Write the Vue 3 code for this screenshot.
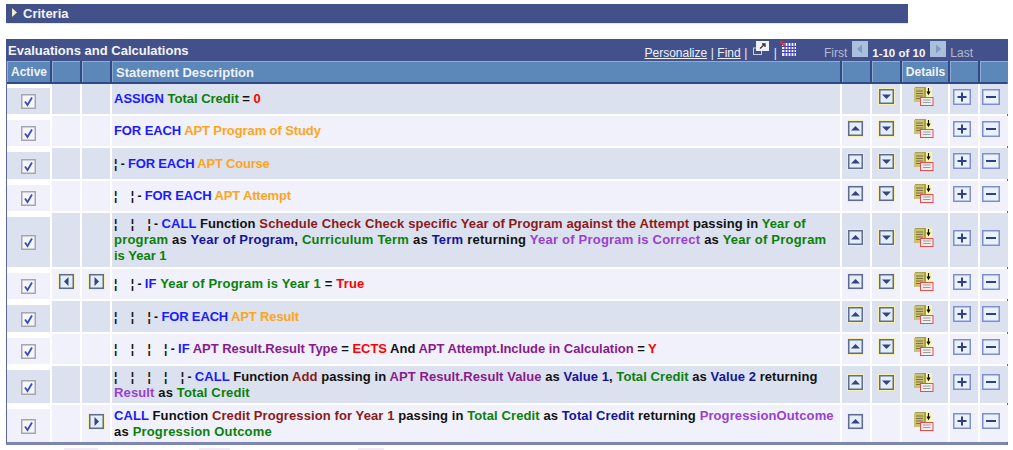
<script setup>
const K = 'kw', V = 'var', O = 'obj', F = 'fn', R = 'lit', P = 'purp', D = 'plain', N = 'navy', M = 'ret', X = 'pre'
const rows = [
  { h: 30, up: 0, down: 1, ls: [0], lines: [[['ASSIGN ', K], ['Total Credit', V], [' = ', D], ['0', R]]] },
  { h: 30, up: 1, down: 1, ls: [-0.1], lines: [[['FOR EACH ', K], ['APT Program of Study', O]]] },
  { h: 31, up: 1, down: 1, ls: [-0.2], lines: [[['¦ - ', X], ['FOR EACH ', K], ['APT Course', O]]] },
  { h: 30, up: 1, down: 1, ls: [-0.15], lines: [[['¦    ¦ - ', X], ['FOR EACH ', K], ['APT Attempt', O]]] },
  { h: 54, up: 1, down: 1, ls: [0.1, 0.22, 0], lines: [
    [['¦    ¦    ¦ - ', X], ['CALL ', K], ['Function ', D], ['Schedule Check Check specific Year of Program against the Attempt ', F], ['passing in ', D], ['Year of', V]],
    [['program ', V], ['as ', D], ['Year of Program', N], [', ', D], ['Curriculum Term ', V], ['as ', D], ['Term ', N], ['returning ', D], ['Year of Program is Correct ', M], ['as ', D], ['Year of Program', V]],
    [['is Year 1', V]]
  ] },
  { h: 30, up: 1, down: 1, left: 1, right: 1, ls: [0.17], lines: [[['¦    ¦ - ', X], ['IF ', K], ['Year of Program is Year 1', V], [' = ', D], ['True', R]]] },
  { h: 31, up: 1, down: 1, ls: [-0.15], lines: [[['¦    ¦    ¦ - ', X], ['FOR EACH ', K], ['APT Result', O]]] },
  { h: 30, up: 1, down: 1, ls: [-0.03], lines: [[['¦    ¦    ¦    ¦ - ', X], ['IF ', K], ['APT Result.Result Type', P], [' = ', D], ['ECTS ', R], ['And ', D], ['APT Attempt.Include in Calculation', P], [' = ', D], ['Y', R]]] },
  { h: 37, up: 1, down: 1, ls: [0.08, 0.14], lines: [
    [['¦    ¦    ¦    ¦    ¦ - ', X], ['CALL ', K], ['Function ', D], ['Add ', F], ['passing in ', D], ['APT Result.Result Value ', P], ['as ', D], ['Value 1', N], [', ', D], ['Total Credit ', V], ['as ', D], ['Value 2 ', N], ['returning', D]],
    [['Result ', M], ['as ', D], ['Total Credit', V]]
  ] },
  { h: 37, up: 1, down: 0, right: 1, ls: [0.1, 0.18], lines: [
    [['CALL ', K], ['Function ', D], ['Credit Progression for Year 1 ', F], ['passing in ', D], ['Total Credit ', V], ['as ', D], ['Total Credit ', N], ['returning ', D], ['ProgressionOutcome', M]],
    [['as ', D], ['Progression Outcome', V]]
  ] }
]
const bodyRows = rows.map(r => r.h + 'px').join(' ')
</script>

<template>
  <div class="page">
    <svg class="defs" width="0" height="0" aria-hidden="true">
      <symbol id="i-check" viewBox="0 0 15 15">
        <rect x="0" y="0" width="15" height="15" fill="#a6a6ae" />
        <rect x="1.5" y="1.5" width="12" height="12" fill="#f5f6fb" />
        <path d="M4 7.5 L6.5 11 L11 3.5" fill="none" stroke="#3a4fb8" stroke-width="1.8" />
      </symbol>
      <symbol id="i-arrow" viewBox="0 0 17 17">
        <rect x="0" y="0" width="17" height="17" fill="#f6efb4" />
        <rect x="1" y="1" width="15" height="15" fill="#5f6c8c" />
        <rect x="2.5" y="2.5" width="12" height="12" fill="#e4eefb" />
        <path d="M4 10.5 H13 L8.5 6 Z" fill="#35447f" />
      </symbol>
      <symbol id="i-plus" viewBox="0 0 18 16">
        <rect x="0" y="0" width="18" height="16" fill="#7d90cc" />
        <rect x="1.5" y="1.5" width="15" height="13" fill="#eaf1fc" />
        <path d="M9 3.5 V12.5 M4.5 8 H13.5" stroke="#2f4185" stroke-width="2" />
      </symbol>
      <symbol id="i-minus" viewBox="0 0 18 16">
        <rect x="0" y="0" width="18" height="16" fill="#7d90cc" />
        <rect x="1.5" y="1.5" width="15" height="13" fill="#eaf1fc" />
        <path d="M4 8 H14" stroke="#2f4185" stroke-width="2" />
      </symbol>
      <symbol id="i-details" viewBox="0 0 20 19">
        <rect x="9" y="0" width="9" height="10" fill="#fdf7a8" />
        <rect x="1" y="0" width="11" height="14" fill="#a89f4a" />
        <rect x="0" y="1" width="10" height="14" fill="#c9c177" />
        <path d="M2 4 H9 M2 6.5 H9 M2 9 H9 M2 11.5 H6" stroke="#7d7636" stroke-width="1" />
        <path d="M14.5 1 V6 M13 4.5 L14.5 7 L16 4.5" fill="none" stroke="#111" stroke-width="1.2" />
        <rect x="6.5" y="10.5" width="12.5" height="8" fill="#eef0f2" stroke="#ee4a4a" />
        <path d="M9 13 H16.5 M9 15.5 H16.5" stroke="#9a9a9a" />
      </symbol>
    </svg>

    <div class="criteria">
      <svg class="tri" viewBox="0 0 5 9" width="5" height="9"><path d="M0 0 L5 4.5 L0 9 Z" fill="#f3e9c8" /></svg>
      <span>Criteria</span>
    </div>

    <div class="box">
      <div class="title">
        <span class="title-text">Evaluations and Calculations</span>
        <div class="nav">
          <a class="link">Personalize</a><span class="sep">|</span>
          <a class="link">Find</a><span class="sep">|</span>
          <svg class="zoom" viewBox="0 0 16 14" width="16" height="14">
            <rect x="0.5" y="7" width="8" height="6.5" fill="none" stroke="#c7cde0" />
            <rect x="3" y="0" width="13" height="10" fill="#eef1f8" />
            <path d="M7 7.5 L12 3 M9 3 H12 V6" fill="none" stroke="#333" stroke-width="1.3" />
          </svg>
          <span class="sep sep2">|</span>
          <svg class="gridi" viewBox="0 0 16 15" width="16" height="15">
            <rect x="2" y="2" width="14" height="13" fill="#f2f4fc" />
            <path d="M5 2 V15 M8 2 V15 M11 2 V15 M14 2 V15 M2 5.5 H16 M2 8.5 H16 M2 11.5 H16" stroke="#3f3fc0" stroke-width="1.2" />
            <path d="M0 0 L5 5" stroke="#e0322c" stroke-width="2" />
          </svg>
          <span class="dim first">First</span>
          <svg class="pg pg1" viewBox="0 0 16 16" width="16" height="16"><rect width="16" height="16" fill="#a9bfdc" /><path d="M10 3.5 V12.5 L5 8 Z" fill="#7f9ac4" /></svg>
          <span class="count">1-10 of 10</span>
          <svg class="pg pg2" viewBox="0 0 16 16" width="16" height="16"><rect width="16" height="16" fill="#a9bfdc" /><path d="M6 3.5 V12.5 L11 8 Z" fill="#7f9ac4" /></svg>
          <span class="dim last">Last</span>
        </div>
      </div>

      <div class="cols head">
        <div class="hc">Active</div><div class="hc"></div><div class="hc"></div>
        <div class="hc desc">Statement Description</div>
        <div class="hc"></div><div class="hc"></div>
        <div class="hc">Details</div>
        <div class="hc"></div><div class="hc"></div>
      </div>

      <div class="cols body" :style="{ gridTemplateRows: bodyRows }">
        <template v-for="(r, i) in rows" :key="i">
          <div class="cell active" :class="i % 2 ? 'odd' : 'even'">
            <svg class="ck"><use href="#i-check" /></svg>
          </div>
          <div class="cell ic" :class="i % 2 ? 'odd' : 'even'">
            <svg v-if="r.left" class="arrow rotl"><use href="#i-arrow" /></svg>
          </div>
          <div class="cell ic" :class="i % 2 ? 'odd' : 'even'">
            <svg v-if="r.right" class="arrow rotr"><use href="#i-arrow" /></svg>
          </div>
          <div class="cell text" :class="i % 2 ? 'odd' : 'even'">
            <div v-for="(l, j) in r.lines" :key="j" class="line" :style="{ letterSpacing: r.ls[j] + 'px' }">
              <span v-for="(s, k) in l" :key="k" :class="s[1]">{{ s[0] }}</span>
            </div>
          </div>
          <div class="cell ic c-up" :class="i % 2 ? 'odd' : 'even'">
            <svg v-if="r.up" class="arrow"><use href="#i-arrow" /></svg>
          </div>
          <div class="cell ic" :class="i % 2 ? 'odd' : 'even'">
            <svg v-if="r.down" class="arrow rotd"><use href="#i-arrow" /></svg>
          </div>
          <div class="cell ic c-up" :class="i % 2 ? 'odd' : 'even'">
            <svg class="det"><use href="#i-details" /></svg>
          </div>
          <div class="cell ic c-plus" :class="i % 2 ? 'odd' : 'even'">
            <svg class="pm"><use href="#i-plus" /></svg>
          </div>
          <div class="cell ic c-minus" :class="i % 2 ? 'odd' : 'even'">
            <svg class="pm"><use href="#i-minus" /></svg>
          </div>
        </template>
      </div>
    </div>

    <div class="stubs">
      <span class="stub s1"></span><span class="stub s2"></span><span class="stub s3"></span>
    </div>
  </div>
</template>

<style>
html, body { margin: 0; background: #fff; overflow: hidden; }
</style>

<style scoped>
.page {
  width: 1013px;
  height: 450px;
  box-sizing: border-box;
  padding: 4px 0 0 6px;
  font-family: "Liberation Sans", Arial, sans-serif;
  font-size: 12px;
  overflow: hidden;
}
.defs { position: absolute; }
.criteria {
  width: 902px;
  height: 19px;
  box-sizing: border-box;
  background: #43518a;
  box-shadow: 0 1px 0 #e4e8f3;
  display: flex;
  align-items: center;
  padding-left: 6px;
  color: #f2f3f8;
  font-weight: bold;
  font-size: 13px;
}
.tri { margin-right: 6px; margin-top: -3px; }
.box {
  width: 1002px;
  height: 406px;
  margin-top: 16px;
  box-sizing: border-box;
  background: #fff;
  border-left: 1px solid #5a66a0;
  border-right: 1px solid #5a66a0;
  border-bottom: 3px solid #7d87b5;
  border-top: 1px solid #43518a;
}
.title {
  height: 21px;
  background: #43518a;
  color: #f3f4f9;
  display: flex;
  align-items: center;
  margin: 0 -1px;
}
.title-text { font-weight: bold; font-size: 13px; padding: 0 0 0 2px; }
.nav {
  margin-left: auto;
  display: flex;
  align-items: center;
  box-sizing: border-box;
  padding: 5px 35px 0 0;
  height: 21px;
  font-size: 12px;
}
.link { text-decoration: underline; color: #eef0f7; }
.sep { margin: 0 3.5px; color: #eef0f7; }
.zoom { margin: -10px 0 0 2px; }
.sep2 { margin: 0 3px 0 5px; }
.gridi { margin-top: -9px; }
.dim { color: #b4bad4; }
.first { margin-left: 28px; }
.pg { margin: -8px 4px 0 4px; }
.pg1 { margin-left: 5px; }
.count { font-weight: bold; font-size: 11.5px; color: #f7f8fb; }
.pg2 { margin-left: 5px; }
.cols {
  display: grid;
  grid-template-columns: 43px 28px 28px 728px 28px 28px 46px 28px 28px;
  column-gap: 2px;
  box-sizing: border-box;
}
.head {
  height: 23px;
  background: #2f4a86;
  padding-bottom: 2px;
}
.hc {
  background: #5b87b9;
  border-top: 1px solid #8fadd2;
  border-left: 1px solid #8fadd2;
  color: #eef2f8;
  font-weight: bold;
  font-size: 12px;
  display: flex;
  align-items: center;
  justify-content: center;
  box-sizing: border-box;
}
.desc { justify-content: flex-start; padding-left: 3px; font-size: 13px; }
.body { row-gap: 2px; background: #fff; }
.cell { display: flex; align-items: center; justify-content: center; box-sizing: border-box; }
.even { background: #dbe1ee; }
.odd { background: #f0f1fb; }
.active { border-top: 4px solid #fff; padding-top: 1px; }
.ic { padding-bottom: 5px; }
.c-up { padding-right: 2px; }
.c-plus { padding-right: 4px; }
.c-minus { padding-right: 6px; }
.ck { width: 15px; height: 15px; }
.arrow { width: 17px; height: 17px; }
.rotd { transform: rotate(180deg); }
.rotl { transform: rotate(-90deg); }
.rotr { transform: rotate(90deg); }
.det { width: 20px; height: 19px; }
.pm { width: 18px; height: 16px; }
.text {
  flex-direction: column;
  align-items: flex-start;
  padding-left: 2px;
  font-weight: bold;
  font-size: 13px;
  line-height: 16px;
}
.line { white-space: pre; }
.pre { color: #111; font-size: 12px; letter-spacing: 0; }
.kw { color: #1a1aff; }
.var { color: #0a800a; }
.obj { color: #ffa51a; }
.fn { color: #8b1a1a; }
.lit { color: #ff0000; }
.purp { color: #8a1a8a; }
.plain { color: #111; }
.navy { color: #14149a; }
.ret { color: #9a3fd0; }
.stubs { display: flex; height: 2px; margin-top: 3px; }
.stub { display: block; height: 2px; background: #f0ebf5; }
.s1 { width: 34px; margin-left: 58px; }
.s2 { width: 31px; margin-left: 101px; }
.s3 { width: 26px; margin-left: 128px; }
</style>
